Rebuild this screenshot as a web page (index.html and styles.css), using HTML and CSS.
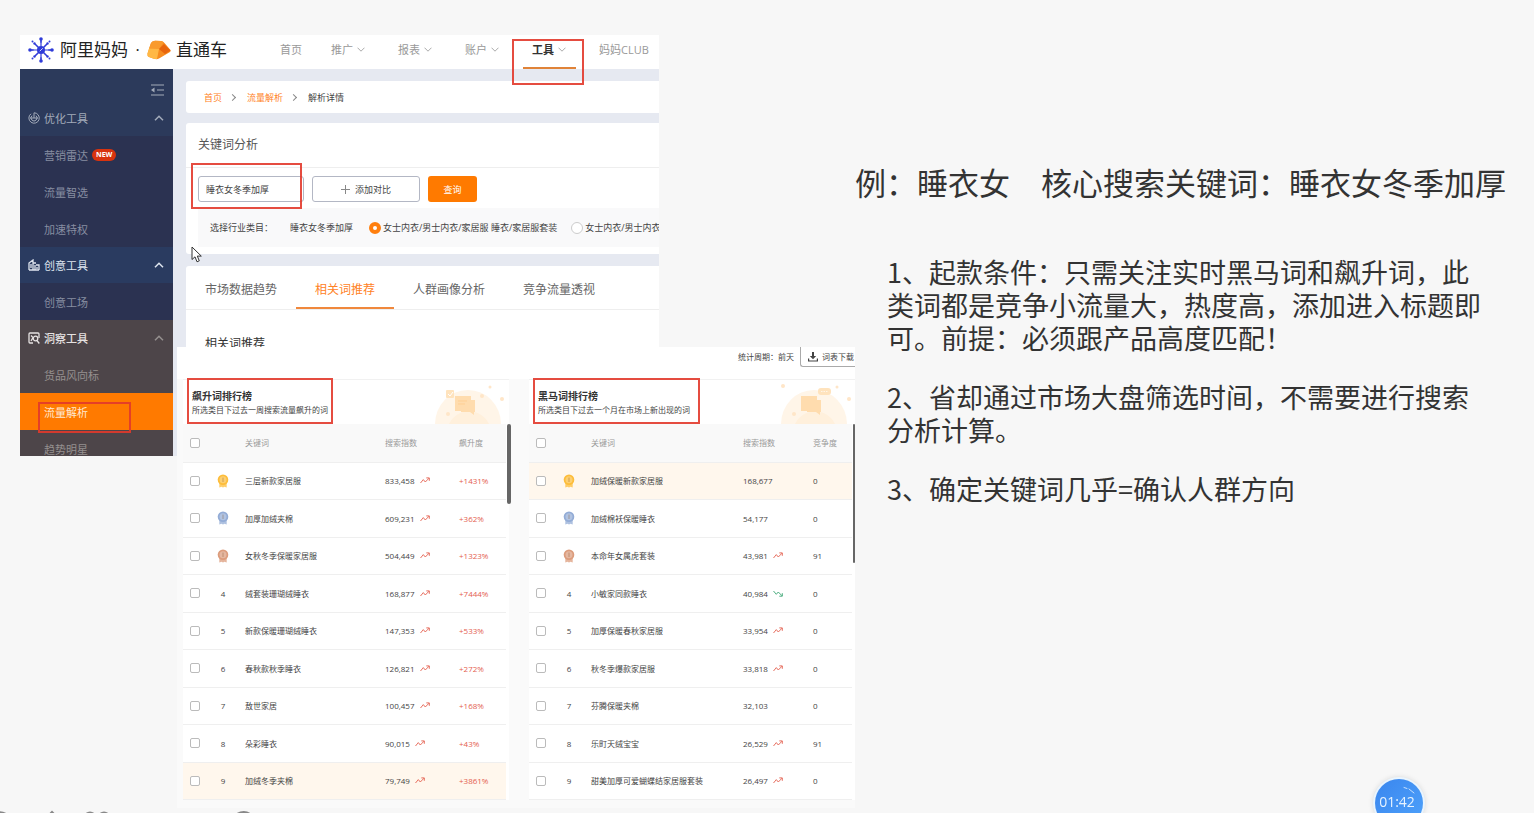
FILE: index.html
```html
<!DOCTYPE html>
<html lang="zh-CN">
<head>
<meta charset="utf-8">
<title>直通车 流量解析</title>
<link rel="stylesheet" href="styles.css">
</head>
<body>
<svg class="defs" aria-hidden="true">
  <symbol id="chev" viewBox="0 0 8 5"><path d="M.5.7 4 4.200 7.500.7" fill="none" stroke="currentColor"/></symbol>
  <symbol id="fold" viewBox="0 0 10 6"><path d="M1 5.200 5 1.200 9 5.200" fill="none" stroke="currentColor" stroke-width="1.500"/></symbol>
  <symbol id="up" viewBox="0 0 10 7"><path d="M.5 6 3.300 2.600 5.300 5 9 1.200M6.300.9H9.300V3.800" fill="none" stroke="currentColor" stroke-width=".9"/></symbol>
  <symbol id="down" viewBox="0 0 10 7"><path d="M.5 1 3.300 4.300 5.300 2 9 5.800M6.300 6.200H9.300V3.200" fill="none" stroke="currentColor" stroke-width=".9"/></symbol>
  <symbol id="medal" viewBox="0 0 12 14"><path d="M2.300 8.500V13.500L4.500 12.800 6 13.500 7.500 12.800 9.700 13.500V8.500Z" fill="currentColor" opacity=".75"/><circle cx="6" cy="5.800" r="5.300" fill="currentColor"/><circle cx="6" cy="5.800" r="3.500" fill="#fff" opacity=".28"/><path d="M6 3.600V8" stroke="#7a4a20" stroke-width=".9" opacity=".4"/></symbol>
</svg>

<main class="slide">
  <div class="collage">
    <section class="app">
      <header class="topbar">
        <div class="brand">
          <svg class="brand-sun" viewBox="0 0 26 26" fill="none" stroke="#2f3bd8" stroke-width="1.600" stroke-linecap="round">
            <circle cx="13" cy="13" r="4" fill="#2f3bd8" stroke="none"/>
            <path d="M13 5V2M13 21v3M5 13H2M21 13h3M10 10 7.500 7.500M16 16l2.500 2.500M16 10l2.500-2.500M10 16l-2.500 2.500"/>
            <path d="M13 9V5M13 17v4M9 13H5M17 13h4" stroke-width="1.200"/>
            <g fill="#2f3bd8" stroke="none"><circle cx="13" cy="2" r="1.800"/><circle cx="13" cy="24" r="1.800"/><circle cx="2" cy="13" r="1.800"/><circle cx="24" cy="13" r="1.800"/><circle cx="6.500" cy="6.500" r="1.200"/><circle cx="19.500" cy="6.500" r="1.200"/><circle cx="6.500" cy="19.500" r="1.200"/><circle cx="19.500" cy="19.500" r="1.200"/><circle cx="4.500" cy="4.500" r="1"/><circle cx="21.500" cy="4.500" r="1"/><circle cx="4.500" cy="21.500" r="1"/><circle cx="21.500" cy="21.500" r="1"/></g>
            <path d="m12 14 2.500-2.500" stroke="#fff" stroke-width=".8"/>
          </svg>
          <span class="brand-name">阿里妈妈</span><span class="brand-dot">·</span>
          <svg class="brand-car" viewBox="0 0 24 20">
            <path d="M4 3Q5 1 8 .8L14 1Q16 1 17.500 3L23.500 10Q24 11 23 12L12 18.500Q10 19.600 7 18.800L2 17Q0 16 .5 13.500Z" fill="#f68b1f"/>
            <path d="M4 3Q5 1 8 .8L14 1Q15.500 1.200 16.500 2.600L12 9 2 8.500Z" fill="#f99a2c"/>
            <path d="M2 8.500 12 9 10 19Q8 19.200 6 18.400L2 17Q0 16 .5 13.500Z" fill="#ffb845"/>
            <path d="M12 9 17 4 23.500 10.500 18 14Z" fill="#e8650d"/>
          </svg>
          <span class="brand-name">直通车</span>
        </div>
        <nav class="nav">
          <a class="nav-item nav-item-short" href="#">首页</a>
          <a class="nav-item" href="#">推广<svg class="chev"><use href="#chev"/></svg></a>
          <a class="nav-item" href="#">报表<svg class="chev"><use href="#chev"/></svg></a>
          <a class="nav-item" href="#">账户<svg class="chev"><use href="#chev"/></svg></a>
          <a class="nav-item nav-item-active" href="#">工具<svg class="chev"><use href="#chev"/></svg><i class="mark mark-nav"></i></a>
          <a class="nav-item" href="#">妈妈CLUB</a>
        </nav>
      </header>

      <div class="app-body">
        <aside class="side">
          <button class="side-toggle" aria-label="收起菜单"><svg viewBox="0 0 13 12" fill="none" stroke="currentColor" stroke-width="1.200"><path d="M0 1h13M6 6h7M0 11h13"/><path d="M0 6 3.500 3.500v5Z" fill="currentColor" stroke="none"/></svg></button>
          <div class="side-head">
            <svg class="side-icon" viewBox="0 0 12 12" fill="none" stroke="currentColor"><path d="M3 1.800A5.200 5.200 0 1 0 6 .8V6"/><path d="M4 3.700A3 3 0 1 0 8 3.700M2 6h8"/></svg>
            优化工具<svg class="fold"><use href="#fold"/></svg></div>
          <div class="side-sub"><a href="#">营销雷达<span class="new">NEW</span></a><a href="#">流量智选</a><a href="#">加速特权</a></div>
          <div class="side-head side-head-bright">
            <svg class="side-icon" viewBox="0 0 12 12" fill="none" stroke="currentColor" stroke-width="1.300"><path d="M1 11V4L5 1v10M1 11h10M5 4h3M8 6h3v5M3 5v4M7 6v5M9 8v2"/></svg>
            创意工具<svg class="fold"><use href="#fold"/></svg></div>
          <div class="side-sub"><a href="#">创意工场</a></div>
          <div class="side-brown">
            <div class="side-head side-head-brown">
              <svg class="side-icon" viewBox="0 0 12 12" fill="none" stroke="currentColor" stroke-width="1.300"><path d="M5 11H2Q1 11 1 10V2Q1 1 2 1H10Q11 1 11 2V6M3 3.500 5 5.500 3 9"/><circle cx="7.500" cy="6.500" r="2.300"/><path d="m9 8.500 2.300 3"/></svg>
              <b>洞察工具</b><svg class="fold"><use href="#fold"/></svg></div>
            <a href="#">货品风向标</a>
            <a class="side-active" href="#">流量解析<i class="mark mark-side"></i></a>
            <a href="#">趋势明星</a>
          </div>
        </aside>

        <div class="content">
          <nav class="card crumbs"><a href="#">首页</a><i class="sep"></i><a href="#">流量解析</a><i class="sep"></i><span>解析详情</span></nav>

          <section class="card query">
            <h2 class="query-title">关键词分析</h2>
            <form class="query-form">
              <input class="field" type="text" aria-label="关键词" value="睡衣女冬季加厚">
              <button class="btn-add" type="button"><svg viewBox="0 0 9 9"><path d="M4.500 0v9M0 4.500h9" stroke="currentColor"/></svg>添加对比</button>
              <button class="btn-go" type="button">查询</button>
              <i class="mark mark-field"></i>
            </form>
            <div class="filter">
              <span class="filter-label">选择行业类目：</span><span class="filter-word">睡衣女冬季加厚</span>
              <label><input type="radio" name="cat" checked>女士内衣/男士内衣/家居服 睡衣/家居服套装</label>
              <label><input type="radio" name="cat">女士内衣/男士内衣/家居服</label>
            </div>
          </section>

          <section class="card detail">
            <nav class="tabs"><a href="#">市场数据趋势</a><a class="tab-on" href="#">相关词推荐</a><a href="#">人群画像分析</a><a href="#">竞争流量透视</a></nav>
            <h2 class="detail-title">相关词推荐</h2>
          </section>
        </div>
      </div>
    </section>

    <section class="ranks">
      <div class="ranks-bar">
        <span>统计周期：前天</span>
        <button class="btn-down"><svg viewBox="0 0 10 10"><path d="M4 0h2v4h2.200L5 7.200 1.800 4H4Z" fill="currentColor"/><path d="M.6 6.500V9h8.800V6.500" fill="none" stroke="currentColor" stroke-width="1.200"/></svg>词表下载</button>
      </div>
      <div class="boards">
        <article class="board">
          <header class="board-head">
            <h3>飙升词排行榜</h3><p>所选类目下过去一周搜索流量飙升的词</p>
            <svg class="deco" viewBox="0 0 72 40"><path d="M0 40A33 34 0 0 1 66 40Z" fill="#fff5e8"/><path d="M14 40A22 22 0 0 1 54 40Z" fill="#fff0dc"/><rect x="11" y="6" width="8" height="8" rx="1" fill="#ffe3bd"/><path d="m13 10 2 2 3-4" stroke="#fff" fill="none"/><path d="M26 16h14v12h-1v3l-4-3h-9Z M20 12h16v15H20Z" fill="#ffdcae"/><path d="M23 17h9M23 20h7" stroke="#ffcf93"/><g fill="#ffe6c8"><circle cx="47" cy="12" r="2"/><circle cx="55" cy="3" r="1.500"/><circle cx="67" cy="15" r="2"/><circle cx="13" cy="30" r="2"/></g></svg>
            <i class="mark mark-board"></i>
          </header>
          <table class="list">
            <colgroup><col class="c-check"><col class="c-rank"><col><col class="c-index"><col class="c-rate"></colgroup>
            <thead><tr><th><input type="checkbox" aria-label="全选"></th><th></th><th>关键词</th><th>搜索指数</th><th>飙升度</th></tr></thead>
            <tbody>
              <tr><td><input type="checkbox" aria-label="选择"></td><td><svg class="medal gold"><use href="#medal"/></svg></td><td>三层新款家居服</td><td>833,458<svg class="trend"><use href="#up"/></svg></td><td class="rise">+1431%</td></tr>
              <tr><td><input type="checkbox" aria-label="选择"></td><td><svg class="medal silver"><use href="#medal"/></svg></td><td>加厚加绒夹棉</td><td>609,231<svg class="trend"><use href="#up"/></svg></td><td class="rise">+362%</td></tr>
              <tr><td><input type="checkbox" aria-label="选择"></td><td><svg class="medal bronze"><use href="#medal"/></svg></td><td>女秋冬季保暖家居服</td><td>504,449<svg class="trend"><use href="#up"/></svg></td><td class="rise">+1323%</td></tr>
              <tr><td><input type="checkbox" aria-label="选择"></td><td>4</td><td>绒套装珊瑚绒睡衣</td><td>168,877<svg class="trend"><use href="#up"/></svg></td><td class="rise">+7444%</td></tr>
              <tr><td><input type="checkbox" aria-label="选择"></td><td>5</td><td>新款保暖珊瑚绒睡衣</td><td>147,353<svg class="trend"><use href="#up"/></svg></td><td class="rise">+533%</td></tr>
              <tr><td><input type="checkbox" aria-label="选择"></td><td>6</td><td>春秋款秋季睡衣</td><td>126,821<svg class="trend"><use href="#up"/></svg></td><td class="rise">+272%</td></tr>
              <tr><td><input type="checkbox" aria-label="选择"></td><td>7</td><td>敖世家居</td><td>100,457<svg class="trend"><use href="#up"/></svg></td><td class="rise">+168%</td></tr>
              <tr><td><input type="checkbox" aria-label="选择"></td><td>8</td><td>朵彩睡衣</td><td>90,015<svg class="trend"><use href="#up"/></svg></td><td class="rise">+43%</td></tr>
              <tr class="hot"><td><input type="checkbox" aria-label="选择"></td><td>9</td><td>加绒冬季夹棉</td><td>79,749<svg class="trend"><use href="#up"/></svg></td><td class="rise">+3861%</td></tr>
            </tbody>
          </table>
          <i class="thumb"></i>
        </article>

        <article class="board board-dark">
          <header class="board-head">
            <h3>黑马词排行榜</h3><p>所选类目下过去一个月在市场上新出现的词</p>
            <svg class="deco" viewBox="0 0 72 40"><path d="M0 40A33 34 0 0 1 66 40Z" fill="#fff5e8"/><path d="M14 40A22 22 0 0 1 54 40Z" fill="#fff0dc"/><rect x="37" y="4" width="13" height="7" rx="3" fill="#ffe3bd"/><path d="M26 16h14v12h-1v3l-4-3h-9Z M20 12h16v15H20Z" fill="#ffdcae"/><path d="M40 7.500h7" stroke="#fff5e8" stroke-dasharray="1.500 1"/><g fill="#ffe6c8"><circle cx="2" cy="2" r="2"/><circle cx="56" cy="3" r="1.500"/><circle cx="68" cy="15" r="2"/><circle cx="13" cy="30" r="2"/></g></svg>
            <i class="mark mark-board"></i>
          </header>
          <table class="list">
            <colgroup><col class="c-check"><col class="c-rank"><col><col class="c-index"><col class="c-rate"></colgroup>
            <thead><tr><th><input type="checkbox" aria-label="全选"></th><th></th><th>关键词</th><th>搜索指数</th><th>竞争度</th></tr></thead>
            <tbody>
              <tr class="hot"><td><input type="checkbox" aria-label="选择"></td><td><svg class="medal gold"><use href="#medal"/></svg></td><td>加绒保暖新款家居服</td><td>168,677</td><td>0</td></tr>
              <tr><td><input type="checkbox" aria-label="选择"></td><td><svg class="medal silver"><use href="#medal"/></svg></td><td>加绒棉袄保暖睡衣</td><td>54,177</td><td>0</td></tr>
              <tr><td><input type="checkbox" aria-label="选择"></td><td><svg class="medal bronze"><use href="#medal"/></svg></td><td>本命年女属虎套装</td><td>43,981<svg class="trend"><use href="#up"/></svg></td><td>91</td></tr>
              <tr><td><input type="checkbox" aria-label="选择"></td><td>4</td><td>小敏家同款睡衣</td><td>40,984<svg class="trend fall"><use href="#down"/></svg></td><td>0</td></tr>
              <tr><td><input type="checkbox" aria-label="选择"></td><td>5</td><td>加厚保暖春秋家居服</td><td>33,954<svg class="trend"><use href="#up"/></svg></td><td>0</td></tr>
              <tr><td><input type="checkbox" aria-label="选择"></td><td>6</td><td>秋冬季爆款家居服</td><td>33,818<svg class="trend"><use href="#up"/></svg></td><td>0</td></tr>
              <tr><td><input type="checkbox" aria-label="选择"></td><td>7</td><td>芬腾保暖夹棉</td><td>32,103</td><td>0</td></tr>
              <tr><td><input type="checkbox" aria-label="选择"></td><td>8</td><td>乐町天绒宝宝</td><td>26,529<svg class="trend"><use href="#up"/></svg></td><td>91</td></tr>
              <tr><td><input type="checkbox" aria-label="选择"></td><td>9</td><td>甜美加厚可爱蝴蝶结家居服套装</td><td>26,497<svg class="trend"><use href="#up"/></svg></td><td>0</td></tr>
            </tbody>
          </table>
          <i class="thumb"></i>
        </article>
      </div>
    </section>

    <svg class="pointer" viewBox="0 0 12 17"><path d="M1 1v12.500l3-2.700 2 5 2.300-1-2-4.700h4Z" fill="#fff" stroke="#333"/></svg>
  </div>

  <article class="notes">
    <h1>例：睡衣女　核心搜索关键词：睡衣女冬季加厚</h1>
    <div class="notes-body">
      <p>1、起款条件：只需关注实时黑马词和飙升词，此类词都是竞争小流量大，热度高，添加进入标题即可。前提：必须跟产品高度匹配！</p>
      <p>2、省却通过市场大盘筛选时间，不需要进行搜索分析计算。</p>
      <p>3、确定关键词几乎=确认人群方向</p>
    </div>
  </article>
</main>

<svg class="peek" viewBox="0 0 260 4" fill="none" stroke="#888" stroke-width="2" aria-hidden="true"><path d="M-6 4Q0 2 6 5M50 5l2-2 2 2M86 5q4-3 8 0M100 5q4-3 8 0M237 5q7-4 13 0"/></svg>
<div class="clock">01:42<svg viewBox="0 0 12 8" aria-hidden="true"><path d="M1 1.500 4 2.500M6 3l5 4" stroke="#fff" stroke-linecap="round" opacity=".7"/></svg></div>
</body>
</html>
```
FILE: styles.css
```css
* { box-sizing: border-box; }

body {
  margin: 0;
  min-height: 100vh;
  overflow: hidden;
  background: #f7f7f7;
  color: #444;
  font-family: "Open Sans", "Noto Sans CJK SC", sans-serif;
}

a { color: inherit; text-decoration: none; }
h1, h2, h3, p { margin: 0; font-weight: 400; }
button, input { margin: 0; padding: 0; font: inherit; color: inherit; }
.defs { position: absolute; width: 0; height: 0; }

.slide {
  display: grid;
  grid-template-columns: 835fr 679fr;
  padding: 35px 0 0 20px;
}

/* overlapping captures */
.collage {
  position: relative;
  display: grid;
  grid-template-columns: 157fr 482fr 196fr;
  grid-template-rows: 312px auto;
}
.app { grid-column: 1 / 3; grid-row: 1 / 3; align-self: start; min-width: 0; }
.ranks { grid-column: 2 / 4; grid-row: 2; z-index: 1; min-width: 0; }

/* red annotation frames */
.mark { position: absolute; border: 2px solid #e2382b; opacity: .9; pointer-events: none; }
.mark-nav { left: -20px; top: 4px; width: 72px; height: 46px; }
.mark-side { left: 18px; top: 9px; width: 93px; height: 31px; }
.mark-field { left: 5px; top: -5px; width: 111px; height: 46px; }
.mark-board { left: 4px; top: -2px; width: 146px; height: 46px; }
.board-dark .mark-board { width: 167px; }

/* top bar */
.topbar { display: flex; align-items: center; height: 34px; padding-left: 8px; background: #fff; }
.brand { display: flex; flex: none; align-items: center; width: 252px; padding-bottom: 5px; color: #222; }
.brand-sun { width: 26px; height: 26px; margin-right: 6px; }
.brand-name { font-size: 17px; line-height: 24px; }
.brand-dot { width: 19px; text-align: center; font-size: 16px; line-height: 24px; }
.brand-car { width: 24px; height: 20px; margin-right: 5px; }
.nav { display: flex; flex: none; align-self: stretch; }
.nav-item {
  position: relative;
  display: flex;
  align-items: center;
  width: 67px;
  padding-bottom: 6px;
  font-size: 11px;
  color: #999;
}
.nav-item-short { width: 51px; }
.nav-item-active { color: #333; font-weight: 700; }
.nav-item-active::after {
  content: "";
  position: absolute;
  left: -9px;
  bottom: 0;
  width: 53px;
  height: 2px;
  background: #e08338;
}
.chev { width: 8px; height: 5px; margin-left: 4px; color: #aaa; }

/* sidebar */
.app-body { display: flex; height: 387px; }
.side {
  display: flex;
  flex-direction: column;
  flex: 0 0 153px;
  overflow: hidden;
  background: #2c3a5b;
  color: #a3abba;
  font-size: 11px;
}
.side-toggle {
  align-self: flex-end;
  flex: none;
  width: 13px;
  height: 12px;
  margin: 15px 9px 4px;
  border: 0;
  background: none;
  line-height: 0;
}
.side-toggle svg { width: 13px; height: 12px; }
.side-head { display: flex; flex: none; align-items: center; height: 36px; padding: 0 9px 0 8px; }
.side-head-bright { color: #dfe5ef; background: #2a3b60; }
.side-head-brown b { color: #e6e2e2; font-weight: 500; }
.side-icon { width: 12px; height: 12px; margin-right: 4px; }
.fold { width: 10px; height: 6px; margin-left: auto; }
.side-sub { flex: none; background: #2b3251; color: #878ea1; }
.side-sub a, .side-brown a { display: flex; align-items: center; height: 37px; padding-left: 24px; }
.side-brown { background: #4d4549; color: #95908f; }
.side-brown .side-icon { color: #e6e2e2; }
.side-brown .side-active { position: relative; background: #ff7a00; color: #ffe9d2; }
.new {
  margin-left: 4px;
  padding: 0 4px;
  border-radius: 6px;
  background: #d8330f;
  color: #fff;
  font-size: 7px;
  line-height: 12px;
  font-weight: 700;
}

/* app content */
.content {
  display: flex;
  flex: 1;
  flex-direction: column;
  gap: 10px;
  min-width: 0;
  padding: 12px 0 0 13px;
  overflow: hidden;
  background: #e6e9f1;
}
.card { flex: none; border-radius: 3px 0 0 3px; background: #fff; }
.crumbs { display: flex; align-items: center; height: 32px; padding-left: 18px; font-size: 9px; }
.crumbs a { color: #ff8226; }
.sep { width: 5px; height: 5px; margin: 0 12px 0 8px; border: solid #888; border-width: 1px 1px 0 0; transform: rotate(45deg); }
.query { height: 131px; }
.query-title { padding-left: 12px; font-size: 12px; line-height: 44px; border-bottom: 1px solid #eee; color: #555; }
.query-form { position: relative; display: flex; gap: 8px; padding: 8px 0 6px 12px; font-size: 9px; }
.query-form > * { height: 26px; border-radius: 3px; }
.query-form .mark { height: 46px; border-radius: 0; }
.field { width: 106px; padding: 0 7px; border: 1px solid #b3b7c4; background: #fff; }
.btn-add { display: flex; align-items: center; justify-content: center; gap: 5px; width: 108px; border: 1px solid #b3b7c4; background: #fff; }
.btn-add svg { width: 9px; height: 9px; color: #888; }
.btn-go { width: 49px; border: 0; background: #ff7a00; color: #fff; }
.filter {
  display: flex;
  align-items: center;
  height: 39px;
  margin-left: 12px;
  padding-left: 12px;
  overflow: hidden;
  background: #f9f9fa;
  font-size: 9px;
  white-space: nowrap;
}
.filter-label { flex: none; width: 80px; }
.filter-word { flex: none; width: 79px; }
.filter label { display: flex; flex: none; align-items: center; gap: 2px; margin-right: 14px; }
.filter input { appearance: none; width: 12px; height: 12px; border: 1px solid #ccc; border-radius: 50%; background: #fff; }
.filter input:checked { border: 4px solid #ff7f0e; }
.detail { flex: 1; margin-top: 2px; }
.tabs { display: flex; border-bottom: 1px solid #eee; font-size: 12px; color: #666; }
.tabs a { height: 43px; padding: 0 19px; line-height: 48px; }
.tabs .tab-on { border-bottom: 2px solid #f0883c; color: #ff8226; }
.detail-title { padding: 24px 0 0 19px; font-size: 12px; line-height: 20px; color: #333; }

/* keyword rankings */
.ranks { display: flex; flex-direction: column; overflow: hidden; padding-bottom: 8px; background: #fafafa; font-size: 8px; }
.ranks-bar { display: flex; justify-content: flex-end; gap: 6px; height: 32px; background: #fff; line-height: 20px; }
.btn-down {
  display: flex;
  align-items: center;
  gap: 4px;
  height: 20px;
  padding: 0 1px 0 7px;
  border: solid #aaa;
  border-width: 0 0 1px 1px;
  border-radius: 0 0 0 3px;
  background: #fff;
}
.btn-down svg { width: 10px; height: 10px; }
.boards { display: grid; grid-template-columns: 1fr 1fr; gap: 20px; padding-left: 6px; }
.board { position: relative; min-width: 0; background: #fff; border-top: 1px solid #f1f1f1; }
.board-head { position: relative; height: 44px; padding: 9px 0 0 9px; }
.board-head h3 { font-size: 10px; line-height: 14px; font-weight: 700; color: #333; }
.board-head p { line-height: 14px; }
.deco { position: absolute; right: 2px; bottom: 0; width: 72px; height: 40px; }
.list { width: calc(100% - 3px); height: 376px; border-collapse: collapse; table-layout: fixed; }
.c-check { width: 24px; }
.c-rank { width: 32px; }
.c-index { width: 74px; }
.c-rate { width: 53px; }
.board-dark .c-index { width: 70px; }
.board-dark .c-rate { width: 45px; }
.list th, .list td { height: 37px; padding: 0 0 0 6px; border-bottom: 1px solid #efefef; text-align: left; font-weight: 400; white-space: nowrap; }
.list th { height: 38px; background: #f9f9f9; color: #999; }
.list th:nth-child(-n+2), .list td:nth-child(-n+2) { padding: 0; text-align: center; }
.list input { appearance: none; display: block; width: 10px; height: 10px; margin: 0 auto; border: 1px solid #bbb; border-radius: 2px; background: #fff; }
.list .hot td { background: #fff7ed; }
.list .rise { color: #e4604f; }
.medal { display: block; width: 12px; height: 14px; margin: 0 auto; }
.gold { color: #fdbd3a; }
.silver { color: #93acd6; }
.bronze { color: #dc9c7c; }
.trend { width: 10px; height: 7px; margin-left: 5px; color: #e4604f; }
.fall { color: #3aa573; }
.thumb { position: absolute; right: -2px; top: 44px; width: 4px; height: 80px; border-radius: 2px; background: #666; }
.board-dark .thumb { right: 0; width: 2px; height: 139px; }

.pointer { position: absolute; left: 171px; top: 211px; width: 12px; height: 17px; }

/* notes */
.notes { min-width: 0; padding-top: 126px; color: #333; font-family: "Noto Sans CJK SC", sans-serif; }
.notes h1 { font-size: 31px; line-height: 42px; white-space: nowrap; }
.notes-body { display: grid; gap: 26px; padding: 52px 44px 0 32px; font-size: 27px; line-height: 33px; }

/* player overlays */
.peek { position: fixed; left: 0; bottom: 0; width: 260px; height: 4px; }
.clock {
  position: fixed;
  right: 111px;
  bottom: -14px;
  width: 48px;
  height: 48px;
  padding-right: 4px;
  border-radius: 50%;
  background: linear-gradient(135deg, #3a86ee, #4ea2fb);
  box-shadow: 0 0 0 2px #e9f5ff, 0 0 6px #bbb;
  color: #e6f3ff;
  font-size: 14px;
  line-height: 46px;
  text-align: center;
}
.clock svg { position: absolute; right: 8px; top: 7px; width: 12px; height: 8px; }
```
